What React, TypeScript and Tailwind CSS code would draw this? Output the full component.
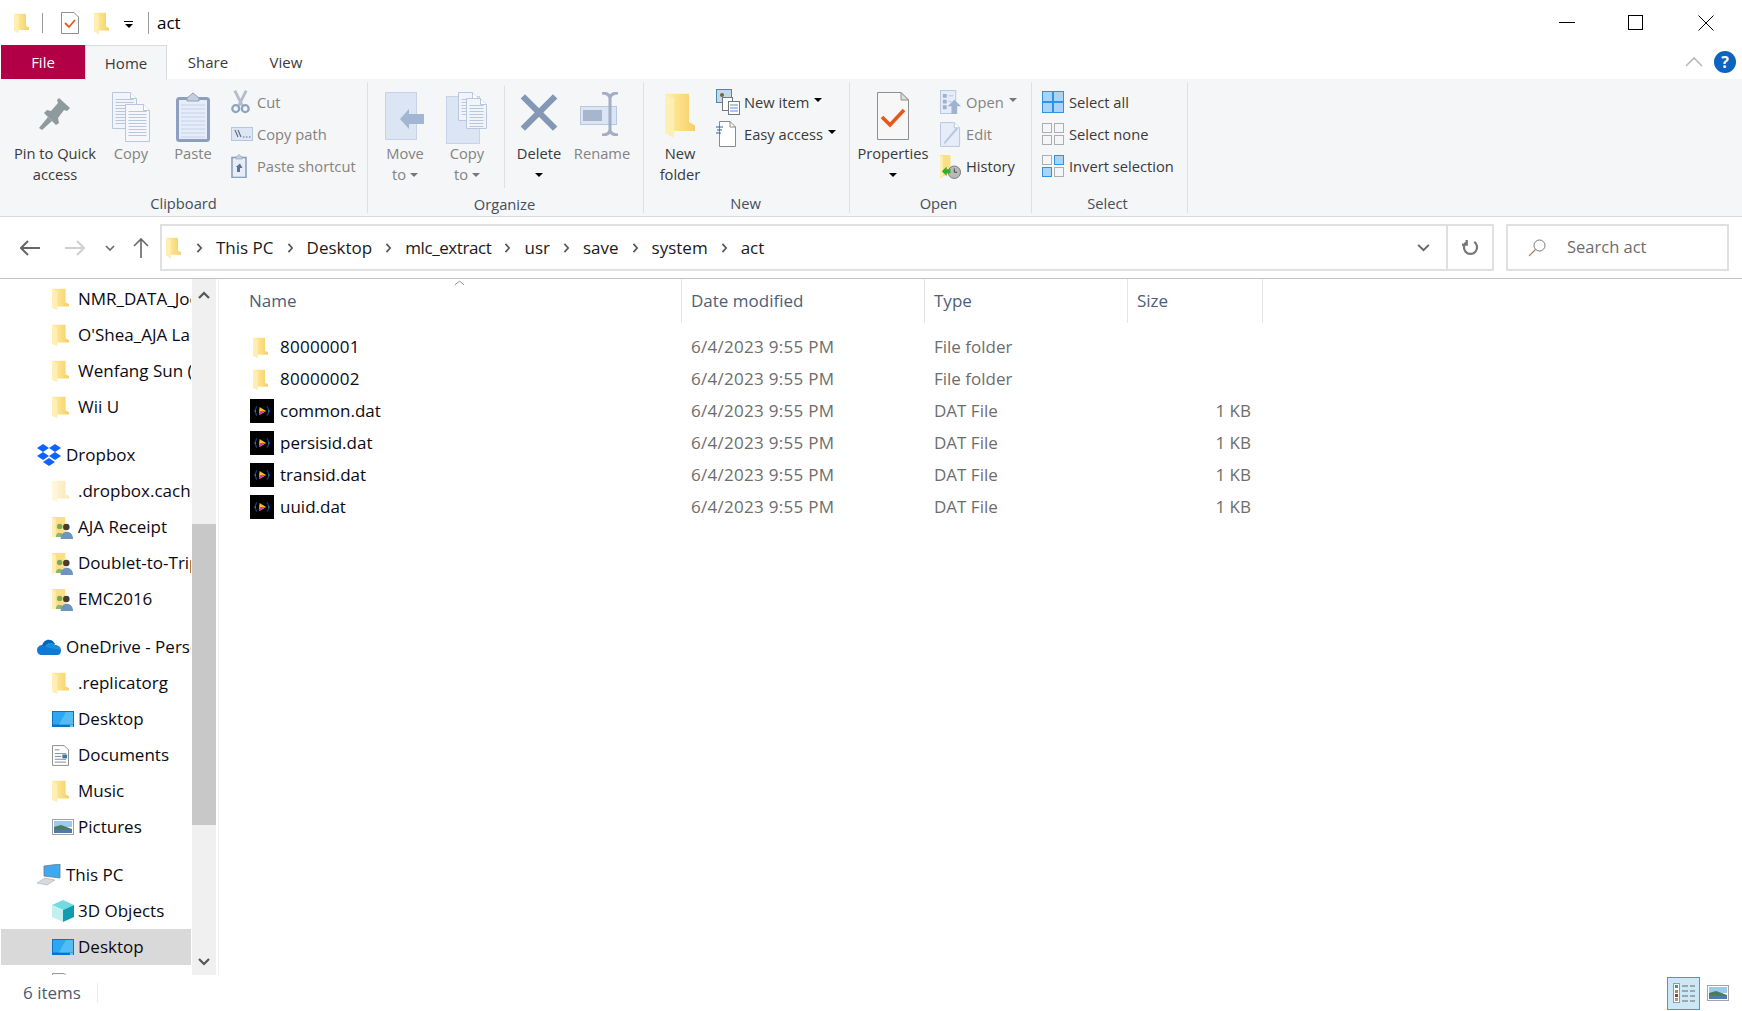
import type { ReactNode } from "react";

const font = { fontFamily: '"Open Sans", "Noto Sans", sans-serif' };

function Folder({ className = "w-[17px] h-[22px]", faded = false }: { className?: string; faded?: boolean }) {
  return (
    <svg viewBox="0 0 20 26" className={`${className} ${faded ? "opacity-45" : ""} shrink-0`} preserveAspectRatio="none">
      <defs>
        <linearGradient id="fg" x1="0" x2="1" y1="0" y2="0">
          <stop offset="0" stopColor="#fff0b0" />
          <stop offset="0.5" stopColor="#fbdf85" />
          <stop offset="1" stopColor="#f6cf68" />
        </linearGradient>
      </defs>
      <path d="M0 1H16V17L20 19V22H6V26L0 23Z" fill="url(#fg)" />
      <path d="M0 1L6 4V26L0 23Z" fill="#ffefb4" />
    </svg>
  );
}

function UserFolder() {
  return (
    <svg viewBox="0 0 22 24" className="w-[21px] h-[23px] shrink-0">
      <path d="M0 1H14V17L0 22Z" fill="#fbdf85" />
      <path d="M0 1L4 3V23L0 21Z" fill="#ffefb4" />
      <circle cx="8" cy="11" r="2.8" fill="#7aa860" />
      <path d="M4 22c0-6 8-6 8 0Z" fill="#8cb670" />
      <circle cx="15" cy="11.5" r="3.4" fill="#4a3a30" />
      <path d="M9 24c0-10 13-10 13 0Z" fill="#6f94c0" />
    </svg>
  );
}

function Doc({ x, y, w, h, fill = "#f1f4fb", stroke = "#b8c6de", lines = 0 }: { x: number; y: number; w: number; h: number; fill?: string; stroke?: string; lines?: number }) {
  const rows = Array.from({ length: lines }, (_, i) => y + 7 + i * 3);
  return (
    <g>
      <path d={`M${x} ${y}H${x + w - 6}L${x + w} ${y + 6}V${y + h}H${x}Z`} fill={fill} stroke={stroke} />
      <path d={`M${x + w - 6} ${y}V${y + 6}H${x + w}`} fill="#fff" stroke={stroke} />
      {rows.map((r) => (
        <path key={r} d={`M${x + 3} ${r}H${x + w - 3}`} stroke="#b8c6de" />
      ))}
    </g>
  );
}

function PinIcon() {
  return (
    <svg viewBox="0 0 32 34" className="w-[32px] h-[34px]">
      <path d="M20 1L31 11L28 14L25 13L19 21L20 26L17 28L5 16L8 13L12 14L19 6L18 3Z" fill="#8f9a9e" />
      <path d="M9 20L13 24L3 33L0 31Z" fill="#8f9a9e" />
    </svg>
  );
}

function CopyIcon() {
  return (
    <svg viewBox="0 0 38 50" className="w-[38px] h-[50px]">
      <Doc x={0.5} y={0.5} w={24} h={36} lines={9} />
      <Doc x={13.5} y={12.5} w={24} h={37} lines={9} fill="#f5f7fc" />
    </svg>
  );
}

function PasteIcon() {
  const rows = [10, 14, 18, 22, 26, 30, 34, 38, 42];
  return (
    <svg viewBox="0 0 34 50" className="w-[34px] h-[50px]">
      <rect x="1.5" y="6.5" width="31" height="42" rx="2" fill="#e6edf9" stroke="#8c9fbf" strokeWidth="3" />
      <path d="M11 6L17 1L23 6V9H11Z" fill="#c7cedb" stroke="#8c9fbf" />
      {rows.map((r) => (
        <path key={r} d={`M5 ${r + 3}H29`} stroke="#c5d2e8" />
      ))}
    </svg>
  );
}

function CutIcon() {
  return (
    <svg viewBox="0 0 20 26" className="w-[19px] h-[26px]">
      <path d="M4 1L12 17M16 1L8 17" stroke="#b5bccb" strokeWidth="3" />
      <circle cx="5" cy="20" r="3.6" fill="none" stroke="#8ea2c2" strokeWidth="2.4" />
      <circle cx="15" cy="20" r="3.6" fill="none" stroke="#8ea2c2" strokeWidth="2.4" />
    </svg>
  );
}

function CopyPathIcon() {
  return (
    <svg viewBox="0 0 22 14" className="w-[22px] h-[14px]">
      <rect x="0.5" y="0.5" width="21" height="13" fill="#dce6f5" stroke="#b5c6e0" />
      <path d="M4 3L7 10M7 3L10 10" stroke="#5a6a80" strokeWidth="1.1" />
      <path d="M12 10h1.4M15 10h1.4M18 10h1.4" stroke="#5a6a80" />
    </svg>
  );
}

function PasteShortcutIcon() {
  return (
    <svg viewBox="0 0 16 24" className="w-[16px] h-[24px]">
      <rect x="1" y="3.5" width="14" height="20" fill="#e6edf9" stroke="#8c9fbf" strokeWidth="1.6" />
      <path d="M5 3L8 0.5L11 3V5H5Z" fill="#c7cedb" stroke="#8c9fbf" strokeWidth="0.6" />
      <path d="M6 18V13H4.8L9 9.5L11.5 14H9V18Z" fill="#5f7390" />
    </svg>
  );
}

function MoveToIcon() {
  return (
    <svg viewBox="0 0 40 48" className="w-[40px] h-[48px]">
      <rect x="0.5" y="0.5" width="31" height="47" fill="#dbe5f4" stroke="#c6d3e8" />
      <path d="M15 27L24 17V22H39V32H24V37Z" fill="#a2b5d2" />
    </svg>
  );
}

function CopyToIcon() {
  return (
    <svg viewBox="0 0 42 52" className="w-[42px] h-[52px]">
      <rect x="0.5" y="4.5" width="33" height="47" fill="#dbe5f4" stroke="#c6d3e8" />
      <Doc x={12.5} y={0.5} w={20} h={28} lines={6} />
      <Doc x={20.5} y={6.5} w={20} h={30} lines={8} />
    </svg>
  );
}

function RenameIcon() {
  return (
    <svg viewBox="0 0 44 44" className="w-[44px] h-[44px]">
      <rect x="0.5" y="14.5" width="36" height="18" fill="#dbe5f4" stroke="#b8c8e0" />
      <rect x="3" y="18" width="19" height="11" fill="#a6b6cf" />
      <path d="M22 1Q29 1 30 6V38Q29 43 22 43M38 1Q31 1 30 6M38 43Q31 43 30 38" fill="none" stroke="#a0aec6" strokeWidth="3" />
    </svg>
  );
}

function NewItemIcon() {
  return (
    <svg viewBox="0 0 24 26" className="w-[24px] h-[26px]">
      <rect x="0.5" y="0.5" width="15" height="13" fill="#c3d8ea" stroke="#4d86a8" />
      <circle cx="6" cy="6" r="2" fill="#7a6040" />
      <rect x="6.5" y="8.5" width="10" height="13" fill="#fff" stroke="#777" />
      <rect x="12.5" y="12.5" width="11" height="13" fill="#fff" stroke="#777" />
      <path d="M14 16h8M14 19h8M14 22h8" stroke="#5d8bd0" />
    </svg>
  );
}

function EasyAccessIcon() {
  return (
    <svg viewBox="0 0 20 26" className="w-[20px] h-[26px]">
      <path d="M3.5 0.5H14L19.5 6V25.5H3.5Z" fill="#fff" stroke="#8a8a8a" />
      <path d="M14 0.5V6H19.5" fill="none" stroke="#8a8a8a" />
      <path d="M0 6H7M1 9H6M0 12H5" stroke="#2a64a8" strokeWidth="1.2" />
    </svg>
  );
}

function PropertiesIcon() {
  return (
    <svg viewBox="0 0 32 48" className="w-[32px] h-[48px]">
      <path d="M0.5 0.5H24L31.5 8V47.5H0.5Z" fill="#f7f7f7" stroke="#8f8f8f" />
      <path d="M24 0.5V8H31.5Z" fill="#dedede" stroke="#8f8f8f" />
      <path d="M5 25L13 33L27 18" fill="none" stroke="#e8561a" strokeWidth="3.6" />
    </svg>
  );
}

function OpenIcon() {
  return (
    <svg viewBox="0 0 22 26" className="w-[21px] h-[25px]">
      <rect x="0.5" y="0.5" width="16" height="24" fill="#e6edf8" stroke="#b5c6e0" />
      <path d="M3 4h4v4H3zM3 10h4v4H3zM3 16h4v4H3z" fill="#9db0cc" />
      <path d="M9 6h5M9 12h3" stroke="#b5c6e0" />
      <path d="M15 10L22 17H18V25H12V17H8Z" fill="#9fb2cf" />
    </svg>
  );
}

function EditIcon() {
  return (
    <svg viewBox="0 0 22 26" className="w-[21px] h-[25px]">
      <path d="M0.5 0.5H15L20.5 6V25.5H0.5Z" fill="#e6edf8" stroke="#b5c6e0" />
      <path d="M15 0.5V6H20.5" fill="#fff" stroke="#b5c6e0" />
      <path d="M19 7L6 22L4 24L5 20L17 6Z" fill="#b7c6df" />
    </svg>
  );
}

function HistoryIcon() {
  return (
    <svg viewBox="0 0 22 26" className="w-[21px] h-[25px]">
      <path d="M0 1H11V20L0 25Z" fill="#fbdf85" />
      <path d="M0 1L3 3V25L0 23Z" fill="#ffefb4" />
      <circle cx="15" cy="19" r="6.5" fill="#b9b9b9" stroke="#777" />
      <path d="M15 15v4h3" stroke="#444" fill="none" />
      <path d="M2 18L7 13V16H11V20H7V23Z" fill="#31b02e" />
    </svg>
  );
}

function SelectGrid({ on, gapped = false }: { on: boolean[]; gapped?: boolean }) {
  const far = gapped ? 12 : 11;
  const size = gapped ? 9 : 10;
  const cells = [
    [0, 0],
    [far, 0],
    [0, far],
    [far, far],
  ];
  return (
    <svg viewBox="0 0 22 22" className="w-[22px] h-[22px]">
      {cells.map(([x, y], i) => (
        <rect key={i} x={x + 0.5} y={y + 0.5} width={size} height={size} fill={on[i] ? "#a9d4f7" : "#f5f6f7"} stroke={on[i] ? "#2f93e0" : "#aeaeae"} />
      ))}
    </svg>
  );
}

function DatIcon() {
  return (
    <svg viewBox="0 0 24 24" className="w-[24px] h-[24px] shrink-0">
      <rect width="24" height="24" fill="#000" />
      <path d="M7 7.5A6.5 6.5 0 0 0 7 16.5M17 7.5A6.5 6.5 0 0 1 17 16.5" fill="none" stroke="#123f86" strokeWidth="1.2" />
      <path d="M4.5 12h1.5M18 12h1.5" stroke="#0d8fd8" strokeWidth="1.4" />
      <path d="M9.5 8L16 12L9.5 16Z" fill="#f2c230" />
      <path d="M9.5 12L16 12L9.5 16Z" fill="#d93aa8" />
      <path d="M9.5 10v4" stroke="#2fb7e0" />
    </svg>
  );
}

function DropboxIcon() {
  return (
    <svg viewBox="0 0 24 22" className="w-[24px] h-[22px] shrink-0">
      <path d="M6 0L12 4L6 8L0 4ZM18 0L24 4L18 8L12 4ZM6 8L12 12L6 16L0 12ZM18 8L24 12L18 16L12 12ZM12 14L18 18L12 22L6 18Z" fill="#0f62fe" />
    </svg>
  );
}

function OneDriveIcon() {
  return (
    <svg viewBox="0 0 24 16" className="w-[24px] h-[16px] shrink-0">
      <path d="M5 7C6 2 10 0 13 1C15 1 17 3 18 5L8 8Z" fill="#0364b8" />
      <path d="M8 7C11 3 16 3 18 6C21 6 24 8 24 11H12Z" fill="#1490df" />
      <path d="M5 6C2 6 0 9 0 11C0 14 2 16 5 16H21C23 16 24 13 24 11L12 9Z" fill="#0f78d4" />
    </svg>
  );
}

function DesktopIcon() {
  return (
    <svg viewBox="0 0 22 16" className="w-[22px] h-[16px] shrink-0">
      <rect width="22" height="16" fill="#0a74cc" />
      <rect x="1" y="1" width="20" height="12.5" fill="#2ea7f2" />
      <path d="M14 1H21V13.5H7Z" fill="#52bcf7" />
      <path d="M18 15h3" stroke="#fff" />
    </svg>
  );
}

function DocumentsIcon() {
  return (
    <svg viewBox="0 0 18 22" className="w-[17px] h-[21px] shrink-0">
      <path d="M0.5 0.5H13L17.5 5V21.5H0.5Z" fill="#fff" stroke="#8a8a8a" />
      <path d="M3 5h5M3 9h12M3 12h7M3 15h12M3 18h12" stroke="#7a8796" />
      <rect x="11" y="10" width="5" height="4" fill="#3b7a9a" />
    </svg>
  );
}

function PicturesIcon() {
  return (
    <svg viewBox="0 0 22 16" className="w-[22px] h-[16px] shrink-0">
      <rect x="0.5" y="0.5" width="21" height="15" fill="#fff" stroke="#a3a3a3" />
      <rect x="2" y="2" width="18" height="6" fill="#9cc9ee" />
      <path d="M2 8L9 6L20 10V11H2Z" fill="#4c7a5a" />
      <rect x="2" y="10.5" width="18" height="3.5" fill="#4b7bb0" />
    </svg>
  );
}

function ThisPcIcon() {
  return (
    <svg viewBox="0 0 24 22" className="w-[24px] h-[22px] shrink-0">
      <path d="M7 2L23 0V14L7 12Z" fill="#3fa9ef" stroke="#6a7a88" strokeWidth="0.8" />
      <path d="M0 19L8 14L18 16L10 21Z" fill="#d6dadd" stroke="#aab0b5" strokeWidth="0.6" />
    </svg>
  );
}

function CubeIcon() {
  return (
    <svg viewBox="0 0 22 22" className="w-[22px] h-[22px] shrink-0">
      <path d="M11 0L22 5L11 10L0 5Z" fill="#73dbe0" />
      <path d="M0 5L11 10V22L0 17Z" fill="#c3f0ee" />
      <path d="M22 5L11 10V22L22 17Z" fill="#0f9bb0" />
    </svg>
  );
}

function Caret({ dark = true }: { dark?: boolean }) {
  return <span className={`inline-block w-0 h-0 border-l-[4px] border-r-[4px] border-t-[4px] border-l-transparent border-r-transparent ${dark ? "border-t-black" : "border-t-[#777]"}`} />;
}

function BigButton({ width, icon, lines, disabled = false, caret }: { width: string; icon: ReactNode; lines: string[]; disabled?: boolean; caret?: "below" | "inline" }) {
  return (
    <div className={`${width} shrink-0 flex flex-col items-center ${disabled ? "text-[#838383]" : "text-[#3a3a3a]"}`}>
      <div className="h-[61px] pt-[10px] flex items-start justify-center">{icon}</div>
      <div className="text-[14.7px] leading-[21px] text-center whitespace-nowrap">{lines[0]}</div>
      {lines[1] && (
        <div className="text-[14.7px] leading-[21px] text-center whitespace-nowrap flex items-center gap-1">
          {lines[1]}
          {caret === "inline" && <Caret dark={!disabled} />}
        </div>
      )}
      {caret === "below" && (
        <div className="h-[21px] flex items-center">
          <Caret />
        </div>
      )}
    </div>
  );
}

function SmallButton({ icon, label, disabled = false, caret = false, iconWidth = "w-[26px]" }: { icon: ReactNode; label: string; disabled?: boolean; caret?: boolean; iconWidth?: string }) {
  return (
    <div className={`h-[32px] flex items-center whitespace-nowrap text-[14.7px] ${disabled ? "text-[#838383]" : "text-[#3a3a3a]"}`}>
      <div className={`${iconWidth} shrink-0 flex items-center justify-start`}>{icon}</div>
      <span>{label}</span>
      {caret && (
        <span className="ml-[5px] mb-[4px] flex">
          <Caret dark={!disabled} />
        </span>
      )}
    </div>
  );
}

function RibbonGroup({ width, label, labelPad = "", children }: { width: string; label: string; labelPad?: string; children: ReactNode }) {
  return (
    <div className={`${width} shrink-0 flex flex-col my-[3px] border-r border-[#dfe0e2]`}>
      <div className="h-[110px] flex">{children}</div>
      <div className={`h-[22px] pt-px text-center text-[14.7px] leading-[22px] text-[#444e5c] ${labelPad}`}>{label}</div>
    </div>
  );
}

function Ribbon() {
  return (
    <div className="h-[139px] bg-[#f5f6f7] border-t border-b border-[#dadbdc] flex">
      <RibbonGroup width="w-[368px]" label="Clipboard">
        <div className="w-[7px]" />
        <BigButton width="w-[96px]" icon={<div className="pt-[5px]"><PinIcon /></div>} lines={["Pin to Quick", "access"]} />
        <BigButton width="w-[56px]" icon={<CopyIcon />} lines={["Copy"]} disabled />
        <BigButton width="w-[68px]" icon={<PasteIcon />} lines={["Paste"]} disabled />
        <div className="pl-[4px] pt-[4px] flex flex-col">
          <SmallButton icon={<CutIcon />} label="Cut" disabled />
          <SmallButton icon={<CopyPathIcon />} label="Copy path" disabled />
          <SmallButton icon={<PasteShortcutIcon />} label="Paste shortcut" disabled />
        </div>
      </RibbonGroup>
      <RibbonGroup width="w-[276px]" label="Organize" labelPad="pr-[2px]">
        <div className="w-[9px]" />
        <BigButton width="w-[56px]" icon={<MoveToIcon />} lines={["Move", "to"]} disabled caret="inline" />
        <BigButton width="w-[68px]" icon={<CopyToIcon />} lines={["Copy", "to"]} disabled caret="inline" />
        <div className="w-px h-[102px] my-1 bg-[#dfe0e2] ml-[3px] mr-[3px]" />
        <BigButton
          width="w-[62px]"
          icon={
            <svg viewBox="0 0 40 40" className="w-[38px] h-[39px] mt-[1px]">
              <path d="M3 3L37 37M37 3L3 37" stroke="#8497b5" strokeWidth="6.5" />
            </svg>
          }
          lines={["Delete"]}
          caret="below"
        />
        <BigButton width="w-[64px]" icon={<RenameIcon />} lines={["Rename"]} disabled />
      </RibbonGroup>
      <RibbonGroup width="w-[206px]" label="New" labelPad="pr-[2px]">
        <div className="w-[6px]" />
        <BigButton width="w-[60px]" icon={<Folder className="w-[30px] h-[46px]" />} lines={["New", "folder"]} />
        <div className="pl-[6px] pt-[4px] flex flex-col">
          <SmallButton icon={<NewItemIcon />} label="New item" caret iconWidth="w-[28px]" />
          <SmallButton icon={<EasyAccessIcon />} label="Easy access" caret iconWidth="w-[28px]" />
        </div>
      </RibbonGroup>
      <RibbonGroup width="w-[182px]" label="Open" labelPad="pr-[4px]">
        <div className="w-[3px]" />
        <BigButton width="w-[80px]" icon={<PropertiesIcon />} lines={["Properties"]} caret="below" />
        <div className="pl-[7px] pt-[4px] flex flex-col">
          <SmallButton icon={<OpenIcon />} label="Open" disabled caret />
          <SmallButton icon={<EditIcon />} label="Edit" disabled />
          <SmallButton icon={<HistoryIcon />} label="History" />
        </div>
      </RibbonGroup>
      <RibbonGroup width="w-[156px]" label="Select" labelPad="pr-[4px]">
        <div className="pl-[10px] pt-[4px] flex flex-col">
          <SmallButton icon={<SelectGrid on={[true, true, true, true]} />} label="Select all" iconWidth="w-[27px]" />
          <SmallButton icon={<SelectGrid on={[false, false, false, false]} gapped />} label="Select none" iconWidth="w-[27px]" />
          <SmallButton icon={<SelectGrid on={[false, true, true, false]} gapped />} label="Invert selection" iconWidth="w-[27px]" />
        </div>
      </RibbonGroup>
    </div>
  );
}

function TitleBar() {
  return (
    <div className="h-[45px] flex items-center bg-white">
      <div className="w-[14px]" />
      <Folder className="w-[15px] h-[20px]" />
      <div className="w-px h-[20px] bg-[#9a9a9a] ml-[13px]" />
      <div className="ml-[18px]">
        <svg viewBox="0 0 18 22" className="w-[18px] h-[22px]">
          <path d="M0.5 0.5H13L17.5 5V21.5H0.5Z" fill="#fff" stroke="#8f8f8f" />
          <path d="M4 11L8 15L14 8" fill="none" stroke="#e8561a" strokeWidth="1.8" />
        </svg>
      </div>
      <div className="ml-[15px]">
        <Folder className="w-[15px] h-[22px]" />
      </div>
      <div className="ml-[15px] mt-[4px] flex flex-col items-center gap-[2px] w-[9px]">
        <div className="w-[9px] h-[1px] bg-black" />
        <Caret />
      </div>
      <div className="w-px h-[22px] bg-[#9a9a9a] ml-[15px]" />
      <div className="ml-[8px] mt-px text-[17px] text-black">act</div>
      <div className="ml-auto flex items-center">
        <div className="w-[68px] flex justify-center">
          <div className="w-[16px] h-px bg-black" />
        </div>
        <div className="w-[68px] flex justify-center">
          <div className="w-[15px] h-[15px] border border-black" />
        </div>
        <div className="w-[3px]" />
        <div className="w-[68px] flex justify-center">
          <svg viewBox="0 0 16 16" className="w-[16px] h-[16px]">
            <path d="M0.5 0.5L15.5 15.5M15.5 0.5L0.5 15.5" stroke="#000" />
          </svg>
        </div>
        <div className="w-[2px]" />
      </div>
    </div>
  );
}

function TabBar() {
  return (
    <div className="h-[34px] flex items-end bg-white relative -mb-px z-10">
      <div className="ml-px w-[84px] h-[34px] bg-[#b10046] text-white text-[15px] flex items-center justify-center">File</div>
      <div className="w-[82px] h-[35px] -mb-px bg-[#f5f6f7] border-l border-r border-t border-[#dadbdc] text-[#3a3a3a] text-[15px] flex items-center justify-center">Home</div>
      <div className="w-[82px] h-[34px] text-[#3a3a3a] text-[15px] flex items-center justify-center">Share</div>
      <div className="w-[74px] h-[34px] text-[#3a3a3a] text-[15px] flex items-center justify-center">View</div>
      <div className="ml-auto flex items-center h-[34px] pr-[6px]">
        <svg viewBox="0 0 18 10" className="w-[18px] h-[10px] mr-[11px]">
          <path d="M1 9L9 1L17 9" fill="none" stroke="#b5b5b5" strokeWidth="1.5" />
        </svg>
        <div className="w-[22px] h-[22px] rounded-full bg-[#0a64c0] text-white text-[16px] font-bold flex items-center justify-center">?</div>
      </div>
    </div>
  );
}

function Crumb() {
  return (
    <svg viewBox="0 0 8 12" className="w-[7px] h-[10px] mx-[13px] shrink-0">
      <path d="M1.5 1L6 6L1.5 11" fill="none" stroke="#555" strokeWidth="2" />
    </svg>
  );
}

function AddressRow() {
  const parts = ["This PC", "Desktop", "mlc_extract", "usr", "save", "system", "act"];
  return (
    <div className="h-[62px] flex items-center border-b border-[#c2c2c2] bg-white">
      <div className="w-[160px] shrink-0 flex items-center">
        <svg viewBox="0 0 20 16" className="w-[20px] h-[16px] ml-[20px]">
          <path d="M8 1L1 8L8 15M1 8H20" fill="none" stroke="#666" strokeWidth="2" />
        </svg>
        <svg viewBox="0 0 20 16" className="w-[20px] h-[16px] ml-[25px]">
          <path d="M12 1L19 8L12 15M19 8H0" fill="none" stroke="#cfcfcf" strokeWidth="2" />
        </svg>
        <svg viewBox="0 0 10 6" className="w-[10px] h-[6px] ml-[20px]">
          <path d="M1 1L5 5L9 1" fill="none" stroke="#666" strokeWidth="1.6" />
        </svg>
        <svg viewBox="0 0 16 20" className="w-[16px] h-[20px] ml-[18px]">
          <path d="M1 8L8 1L15 8M8 1V20" fill="none" stroke="#666" strokeWidth="1.6" />
        </svg>
      </div>
      <div className="w-[1334px] h-[47px] border-2 border-[#e0e0e0] flex items-center">
        <div className="pl-[4px] flex items-center">
          <Folder className="w-[15px] h-[21px]" />
        </div>
        <div className="flex items-center flex-1 text-[17px] text-[#1a1a1a] pl-[2px]">
          <Crumb />
          {parts.map((p, i) => (
            <div key={p} className="flex items-center">
              <span className={p === "mlc_extract" ? "tracking-[-0.4px]" : ""}>{p}</span>
              {i < parts.length - 1 && <Crumb />}
            </div>
          ))}
        </div>
        <svg viewBox="0 0 14 9" className="w-[13px] h-[8px] mr-[16px]">
          <path d="M1 1L7 7L13 1" fill="none" stroke="#666" strokeWidth="2.2" />
        </svg>
        <div className="w-[46px] h-full border-l-2 border-[#e0e0e0] flex items-center justify-center">
          <svg viewBox="0 0 18 18" className="w-[17px] h-[17px]">
            <path d="M5 3A7 7 0 1 0 13 3M5 1V6H0" fill="none" stroke="#777" strokeWidth="2.4" />
          </svg>
        </div>
      </div>
      <div className="w-[223px] h-[47px] ml-[12px] border-2 border-[#e0e0e0] flex items-center text-[#6d6d6d] text-[16.5px]">
        <svg viewBox="0 0 18 18" className="w-[18px] h-[18px] ml-[20px]">
          <circle cx="11.5" cy="6.5" r="5.5" fill="none" stroke="#777" />
          <path d="M7.5 10.5L1 17" stroke="#b08060" strokeWidth="1.2" />
        </svg>
        <span className="ml-[21px]">Search act</span>
      </div>
    </div>
  );
}

type NavItem = { label: string; icon: ReactNode; parent?: boolean; selected?: boolean };

const folder = <Folder />;
const navGroups: NavItem[][] = [
  [
    { label: "NMR_DATA_Joe", icon: folder },
    { label: "O'Shea_AJA Lab", icon: folder },
    { label: "Wenfang Sun (", icon: folder },
    { label: "Wii U", icon: folder },
  ],
  [
    { label: "Dropbox", icon: <DropboxIcon />, parent: true },
    { label: ".dropbox.cache", icon: <Folder faded /> },
    { label: "AJA Receipt", icon: <UserFolder /> },
    { label: "Doublet-to-Triplet", icon: <UserFolder /> },
    { label: "EMC2016", icon: <UserFolder /> },
  ],
  [
    { label: "OneDrive - Personal", icon: <OneDriveIcon />, parent: true },
    { label: ".replicatorg", icon: folder },
    { label: "Desktop", icon: <DesktopIcon /> },
    { label: "Documents", icon: <DocumentsIcon /> },
    { label: "Music", icon: folder },
    { label: "Pictures", icon: <PicturesIcon /> },
  ],
  [
    { label: "This PC", icon: <ThisPcIcon />, parent: true },
    { label: "3D Objects", icon: <CubeIcon /> },
    { label: "Desktop", icon: <DesktopIcon />, selected: true },
    { label: "Documents", icon: <DocumentsIcon /> },
  ],
];

function Sidebar() {
  return (
    <div className="w-[219px] shrink-0 h-[696px] flex border-r border-[#f0f0f0]">
      <div className="w-[190px] ml-px mr-px shrink-0 overflow-hidden flex flex-col gap-3 pt-[2px]">
        {navGroups.map((group, g) => (
          <div key={g} className="flex flex-col">
            {group.map((item) => (
              <div key={item.label + g} className={`h-9 shrink-0 flex items-center whitespace-nowrap text-[17px] text-[#0a0a14] ${item.parent ? "pl-[36px]" : "pl-[51px]"} ${item.selected ? "bg-[#d9d9d9]" : ""}`}>
                <div className={`${item.parent ? "w-[29px]" : "w-[26px]"} shrink-0 flex items-center`}>{item.icon}</div>
                <span>{item.label}</span>
              </div>
            ))}
          </div>
        ))}
      </div>
      <div className="w-[24px] shrink-0 bg-[#f0f0f0] flex flex-col">
        <div className="h-[245px] flex items-start justify-center pt-[12px]">
          <svg viewBox="0 0 12 8" className="w-[12px] h-[8px]">
            <path d="M1 7L6 2L11 7" fill="none" stroke="#555" strokeWidth="2.2" />
          </svg>
        </div>
        <div className="h-[301px] bg-[#c8c8c8]" />
        <div className="flex-1 flex items-end justify-center pb-[9px]">
          <svg viewBox="0 0 12 8" className="w-[12px] h-[8px]">
            <path d="M1 1L6 6L11 1" fill="none" stroke="#555" strokeWidth="2.2" />
          </svg>
        </div>
      </div>
    </div>
  );
}

const files = [
  { name: "80000001", folder: true, type: "File folder", size: "" },
  { name: "80000002", folder: true, type: "File folder", size: "" },
  { name: "common.dat", folder: false, type: "DAT File", size: "1 KB" },
  { name: "persisid.dat", folder: false, type: "DAT File", size: "1 KB" },
  { name: "transid.dat", folder: false, type: "DAT File", size: "1 KB" },
  { name: "uuid.dat", folder: false, type: "DAT File", size: "1 KB" },
];

function FileList() {
  const cols = "grid grid-cols-[463px_243px_203px_135px]";
  return (
    <div className="flex-1 relative">
      <svg viewBox="0 0 12 6" className="absolute left-[235px] top-[1px] w-[11px] h-[6px]">
        <path d="M1 5L6 1L11 5" fill="none" stroke="#888" />
      </svg>
      <div className={`${cols} h-[44px] text-[17px] text-[#4c607a]`}>
        <div className="pl-[30px] border-r border-[#e5e5e5] flex items-center">Name</div>
        <div className="pl-[9px] border-r border-[#e5e5e5] flex items-center">Date modified</div>
        <div className="pl-[9px] border-r border-[#e5e5e5] flex items-center">Type</div>
        <div className="pl-[9px] border-r border-[#e5e5e5] flex items-center">Size</div>
      </div>
      <div className="flex flex-col pt-[8px]">
        {files.map((f) => (
          <div key={f.name} className={`${cols} h-8 items-center text-[17px]`}>
            <div className="pl-[31px] flex items-center text-[#0a0a14]">
              <div className="w-[30px] shrink-0 flex items-center">{f.folder ? <Folder className="w-[15px] h-[21px] ml-[3px]" /> : <DatIcon />}</div>
              <span className={f.folder ? "tracking-[0.25px]" : ""}>{f.name}</span>
            </div>
            <div className="pl-[9px] text-[#6d6d6d] tracking-[0.28px]">6/4/2023 9:55 PM</div>
            <div className="pl-[9px] text-[#6d6d6d]">{f.type}</div>
            <div className="pr-[12px] text-right text-[#6d6d6d]">{f.size}</div>
          </div>
        ))}
      </div>
    </div>
  );
}

function StatusBar() {
  return (
    <div className="h-[36px] flex items-center text-[17px] text-[#4c5a70]">
      <div className="pl-[23px] w-[98px] h-[20px] flex items-center border-r border-[#ececec]">6 items</div>
      <div className="ml-auto flex items-center pr-[13px]">
        <div className="w-[33px] h-[33px] bg-[#cce8f7] border border-[#3c9fcf] flex items-center justify-center">
          <svg viewBox="0 0 22 20" className="w-[22px] h-[20px]">
            <rect x="0.5" y="0.5" width="6" height="19" fill="#fff" stroke="#999" />
            <path d="M9 3h6M17 3h5M9 8h6M17 8h5M9 13h6M17 13h5M9 18h6M17 18h5" stroke="#666" />
            <path d="M2 2h3v3H2z" fill="#4a8aa8" />
            <path d="M2 7h3v3H2z" fill="#a88a4a" />
            <path d="M2 11h3v3H2z" fill="#b03020" />
            <path d="M2 15h3v3H2z" fill="#a0a070" />
          </svg>
        </div>
        <div className="ml-[7px]">
          <PicturesIcon />
        </div>
      </div>
    </div>
  );
}

export default function App() {
  return (
    <div className="w-[1742px] h-[1011px] bg-white overflow-hidden flex flex-col" style={font}>
      <TitleBar />
      <TabBar />
      <Ribbon />
      <AddressRow />
      <div className="flex h-[696px]">
        <Sidebar />
        <FileList />
      </div>
      <StatusBar />
    </div>
  );
}
